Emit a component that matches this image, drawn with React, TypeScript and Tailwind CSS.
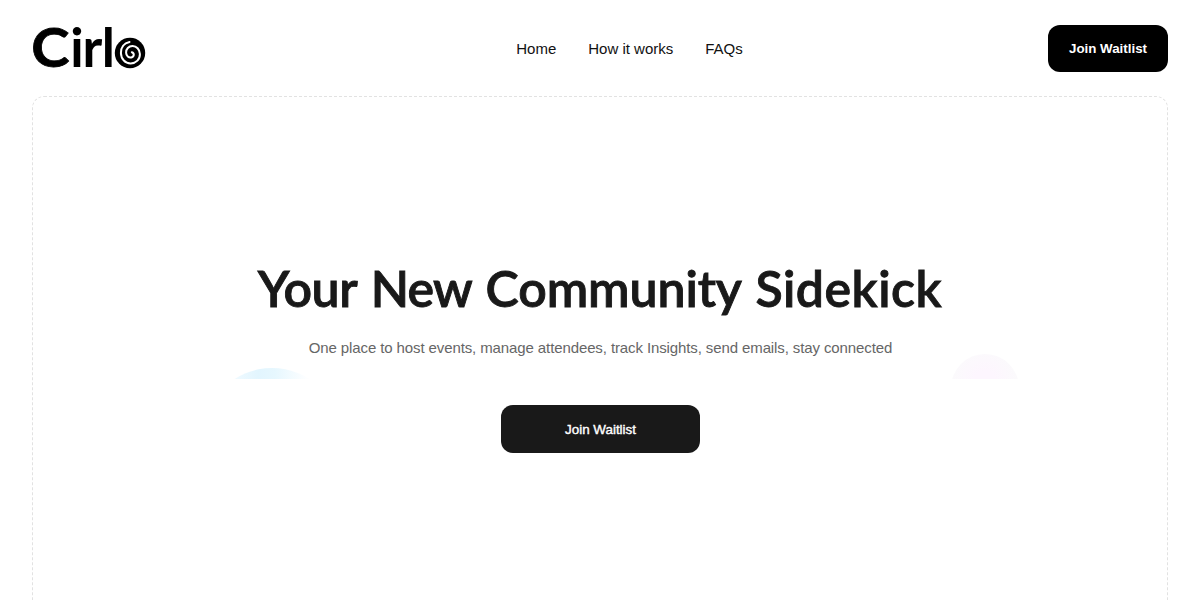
import React from 'react';

const navLinks = ['Home', 'How it works', 'FAQs'];

const Logo: React.FC = () => (
  <svg width="120" height="80" viewBox="-2 -16 120 80" className="-my-4 -ml-0.5 shrink-0 overflow-visible" role="img" aria-label="Cirlo">
    <g className="font-['Lato','Liberation_Sans',sans-serif] font-bold" fontSize="53" fill="#000">
      <text transform="translate(-0.8 43.2) scale(1.09 1)" stroke="#000" strokeWidth="0.8">C</text>
      <text x="38.2" y="43.3">i</text>
      <text x="50.6" y="43.3">r</text>
      <text x="69.8" y="43.3">l</text>
    </g>
    <circle cx="98" cy="29" r="15.2" fill="#000" />
    <path
      d="M97.5 17.9C92 19 88.7 23.5 88.9 29C89.1 35.2 93.3 39.5 98.7 39.4C104.2 39.3 108.1 35.2 107.9 30C107.7 25.4 104.5 22 100.5 22.1C96.6 22.2 94 25 94.1 28.6C94.2 32 96.7 33.9 99.3 33.4C102.3 32.8 102.7 29.2 99.8 28.2"
      fill="none"
      stroke="#fff"
      strokeWidth="2"
      strokeLinecap="round"
    />
  </svg>
);

const Header: React.FC = () => (
  <header className="flex h-24 shrink-0 items-center justify-between px-8">
    <div className="flex w-[120px]">
      <Logo />
    </div>
    <nav className="mt-0.5 ml-[59px] flex gap-8 text-[15px] text-[#111]">
      {navLinks.map((link) => (
        <a key={link} href="#" className="whitespace-nowrap">
          {link}
        </a>
      ))}
    </nav>
    <button className="mt-px h-[47px] w-[120px] rounded-xl bg-black text-[13.33px] font-bold whitespace-nowrap text-white">
      Join Waitlist
    </button>
  </header>
);

const Hero: React.FC = () => (
  <section className="relative mx-8 flex h-[660px] shrink-0 flex-col items-center rounded-xl border border-dashed border-[#e2e2e2] pt-[162px]">
    {/* Soft colour spots behind the text */}
    <div className="absolute top-[271px] left-[170px] h-[11px] w-[138px] overflow-hidden">
      <div className="h-[138px] w-[138px] rounded-full bg-[linear-gradient(90deg,#f0faff_22%,#e2f5fe_40%,#e6f7fe_52%,#fdfeff_75%)]" />
    </div>
    <div className="absolute top-[257px] left-[918px] h-[25px] w-[68px] overflow-hidden">
      <div className="h-[68px] w-[68px] rounded-full bg-[radial-gradient(circle_at_50%_40%,#fdf6fe_20%,#fbfafc_60%)]" />
    </div>

    <h1 className="relative flex h-[62px] items-center gap-[13.5px] pb-1 font-['Lato','Liberation_Sans',sans-serif] text-[50px] font-semibold whitespace-nowrap text-[#191919] [-webkit-text-stroke:0.9px_#191919]">
      <span className="tracking-[-0.5px]">Your</span>
      <span className="tracking-[-0.7px]">New</span>
      <span className="tracking-[-0.1px]">Community</span>
      <span className="tracking-[0.5px]">Sidekick</span>
    </h1>
    <p className="relative mt-[15px] pl-px text-[15px] leading-6 tracking-[-0.108px] whitespace-nowrap text-[#666]">
      One place to host events, manage attendees, track Insights, send emails, stay connected
    </p>
    <button className="mt-[45px] h-12 w-[199px] rounded-xl bg-[#191919] pt-0.5 pl-px text-[13.4px] text-white [-webkit-text-stroke:0.4px_white]">
      Join Waitlist
    </button>
  </section>
);

const App: React.FC = () => {
  return (
    <div className="flex h-screen flex-col overflow-hidden bg-white font-['Liberation_Sans',Arial,sans-serif]">
      <Header />
      <Hero />
    </div>
  );
};

export default App;
